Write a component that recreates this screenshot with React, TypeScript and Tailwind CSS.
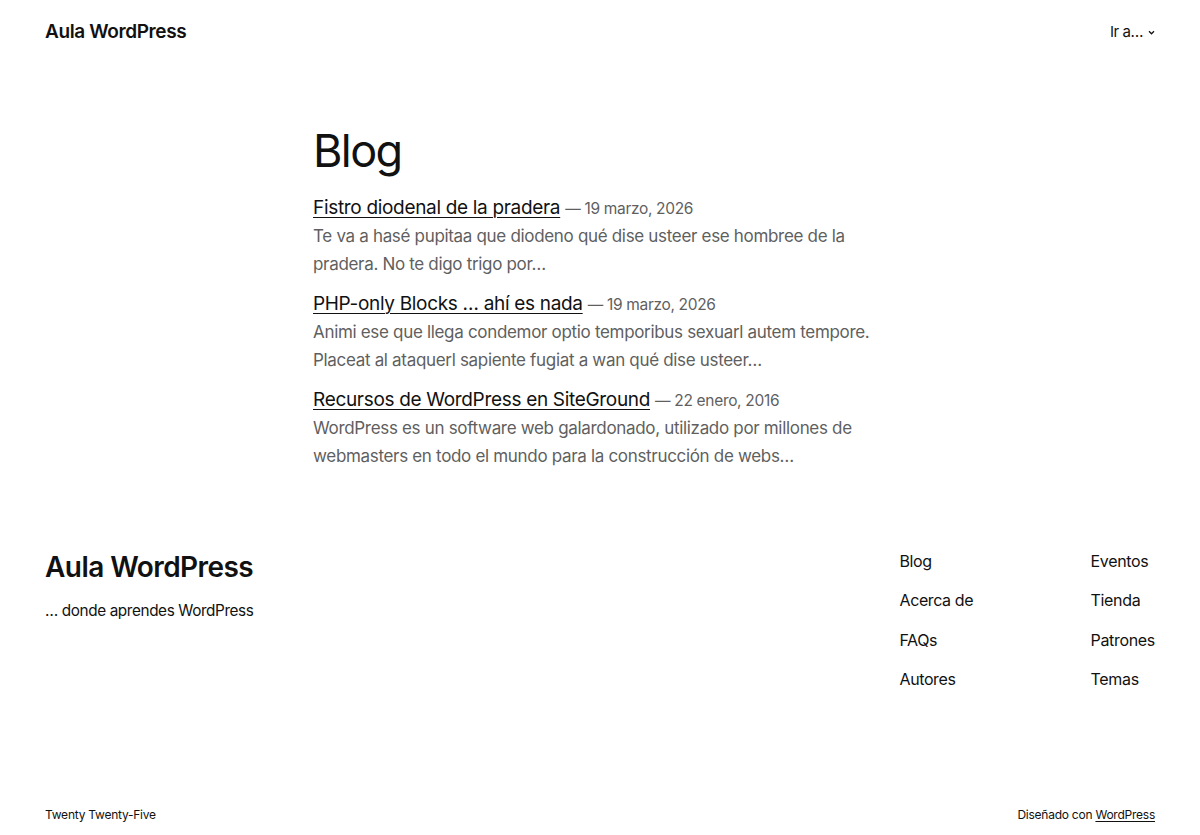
const posts = [
  {
    title: 'Fistro diodenal de la pradera',
    date: '19 marzo, 2026',
    excerpt:
      'Te va a hasé pupitaa que diodeno qué dise usteer ese hombree de la pradera. No te digo trigo por…',
  },
  {
    title: 'PHP-only Blocks … ahí es nada',
    date: '19 marzo, 2026',
    excerpt:
      'Animi ese que llega condemor optio temporibus sexuarl autem tempore. Placeat al ataquerl sapiente fugiat a wan qué dise usteer…',
  },
  {
    title: 'Recursos de WordPress en SiteGround',
    date: '22 enero, 2016',
    excerpt:
      'WordPress es un software web galardonado, utilizado por millones de webmasters en todo el mundo para la construcción de webs…',
  },
]

const navLeft = ['Blog', 'Acerca de', 'FAQs', 'Autores']
const navRight = ['Eventos', 'Tienda', 'Patrones', 'Temas']

export default function App() {
  return (
    <div className="min-h-screen bg-white text-[#111111] font-['Inter',sans-serif]">
      <header className="flex h-[64px] items-center justify-between px-[45px]">
        <a href="#" className="text-[19px] font-semibold tracking-[-0.02em]">
          Aula WordPress
        </a>
        <button className="flex items-center gap-[5px] text-[15px] tracking-[-0.03em]">
          Ir a…
          <svg width="7" height="5" viewBox="0 0 8 6" fill="none">
            <path d="M1 1.5L4 4.5L7 1.5" stroke="#111" strokeWidth="1.5" />
          </svg>
        </button>
      </header>

      <main className="mx-auto w-[574px] pt-[60px]">
        <h1 className="text-[45px] leading-[1.2] tracking-[-0.035em]">Blog</h1>
        <ul className="mt-[16px] flex flex-col gap-[12px]">
          {posts.map((p) => (
            <li key={p.title} className="tracking-[-0.02em]">
              <div className="h-[28px] text-[19px] leading-[28px]">
                <a href="#" className="underline decoration-1 underline-offset-[3px]">
                  {p.title}
                </a>{' '}
                <span className="text-[15.5px] leading-none text-[#5f5f5f]">— {p.date}</span>
              </div>
              <p className="text-[17px] leading-[28px] text-[#5f5f5f]">{p.excerpt}</p>
            </li>
          ))}
        </ul>
      </main>

      <footer className="px-[45px] pt-[79px]">
        <div className="flex justify-between">
          <div>
            <div className="text-[28px] font-semibold leading-[36px] tracking-[-0.02em]">
              Aula WordPress
            </div>
            <p className="mt-[15px] text-[15.3px] tracking-[-0.025em]">… donde aprendes WordPress</p>
          </div>
          <nav className="flex">
            <ul className="flex w-[191px] flex-col gap-[15.4px]">
              {navLeft.map((n) => (
                <li key={n} className="text-[16px] leading-[24px] tracking-[-0.025em]">
                  <a href="#">{n}</a>
                </li>
              ))}
            </ul>
            <ul className="flex flex-col gap-[15.4px]">
              {navRight.map((n) => (
                <li key={n} className="text-[16px] leading-[24px] tracking-[-0.02em]">
                  <a href="#">{n}</a>
                </li>
              ))}
            </ul>
          </nav>
        </div>
        <div className="mt-[115px] flex justify-between text-[12px] tracking-[-0.02em]">
          <span>Twenty Twenty-Five</span>
          <span>
            Diseñado con{' '}
            <a href="#" className="underline underline-offset-2">
              WordPress
            </a>
          </span>
        </div>
      </footer>
    </div>
  )
}
